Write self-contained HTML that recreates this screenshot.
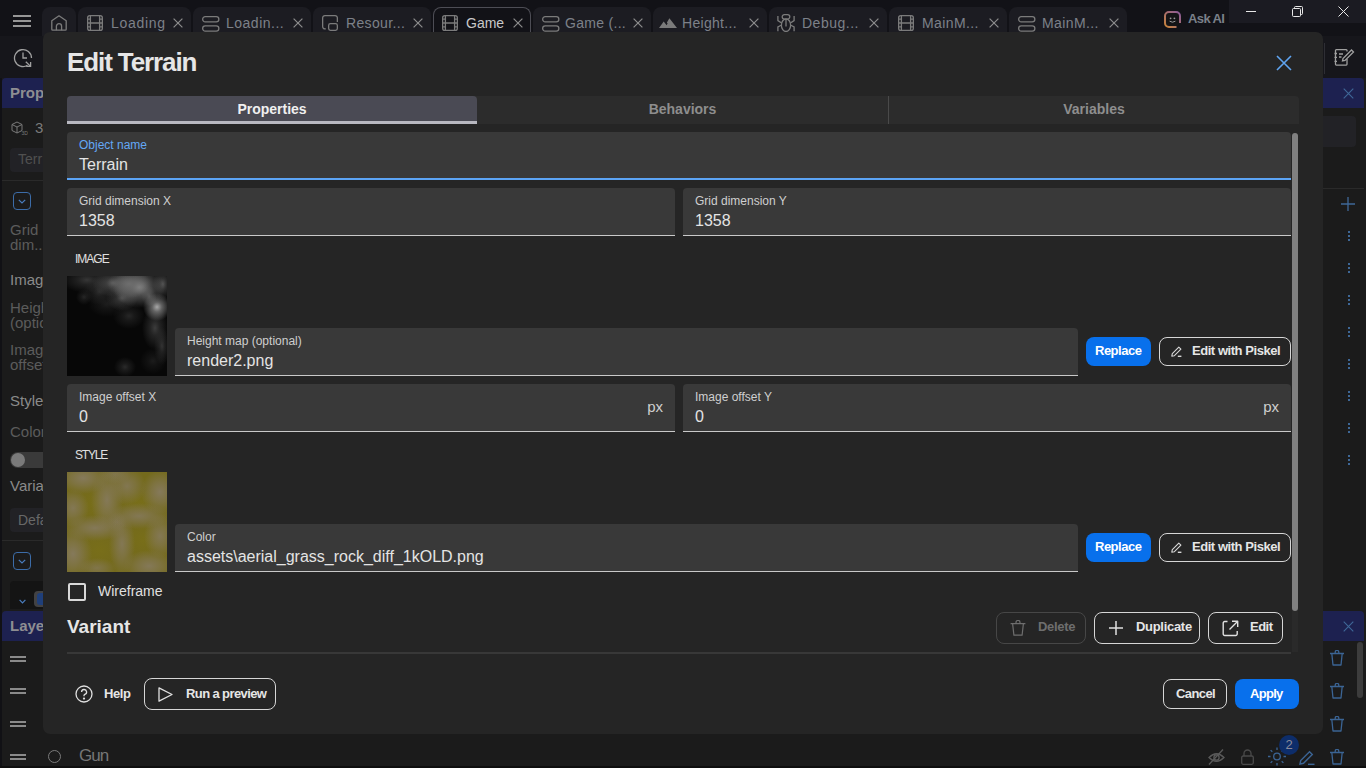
<!DOCTYPE html>
<html><head><meta charset="utf-8">
<style>
*{box-sizing:border-box;margin:0;padding:0}
html,body{width:1366px;height:768px;overflow:hidden;background:#1b1b1b;font-family:"Liberation Sans",sans-serif;position:relative}
.a{position:absolute}
svg{display:block;position:absolute}
#topbar{left:0;top:0;width:1366px;height:36px;background:#121217}
.tab{position:absolute;top:7px;height:29px;background:#1c1c22;border-radius:8px 8px 0 0}
.ttx{position:absolute;top:15px;font-size:14px;color:#7d8189;white-space:nowrap}.tact{color:#c9c9c9}
.tab.act{background:#121217;border:1px solid #4d4d55;border-bottom:none;color:#c4c4c4}
.ib{color:#9a9a9a}
#dlg{left:43px;top:32px;width:1280px;height:702px;background:#252525;border-radius:7px}
.fld{position:absolute;background:#393939;border-radius:4px 4px 0 0;border-bottom:1px solid #c9c9c9}
.fld .lb{position:absolute;left:12px;top:6px;font-size:12px;color:#cfcfcf;white-space:nowrap}
.fld .vl{position:absolute;left:12px;top:24px;font-size:16px;color:#e4e4e4;white-space:nowrap}
.btn{position:absolute;border:1px solid #d6d6d6;border-radius:8px;color:#e6e6e6;font-weight:bold;font-size:13px;white-space:nowrap}
.bblue{position:absolute;background:#0870ec;border-radius:8px;color:#fff;font-weight:bold;font-size:13px;white-space:nowrap}
.sec{position:absolute;font-size:12px;color:#e0e0e0}
.lp{position:absolute;color:#6e6e6e;font-size:15px;white-space:nowrap}
</style></head><body>
<!-- ===== BACKGROUND ===== -->
<div id="topbar" class="a"></div>
<!-- hamburger -->
<div class="a" style="left:13px;top:15px;width:18px;height:2px;background:#969696"></div>
<div class="a" style="left:13px;top:20px;width:18px;height:2px;background:#969696"></div>
<div class="a" style="left:13px;top:25px;width:18px;height:2px;background:#969696"></div>
<!-- tabs -->
<div class="tab" style="left:42px;width:34px"></div>
<svg style="left:51px;top:15px" width="16" height="16" viewBox="0 0 16 16" fill="none" stroke="#7b7b7b" stroke-width="1.3" stroke-linejoin="round"><path d="M.8 5.8L8 .8L15.2 5.8V14.3A.9 .9 0 0 1 14.3 15.2H1.7A.9 .9 0 0 1 .8 14.3Z"/><path d="M5.4 15.2V11.3A2.6 2.6 0 0 1 10.6 11.3V15.2"/></svg>
<div class="tab" style="left:78px;width:113px"></div><svg style="left:87px;top:15px" width="16" height="16" viewBox="0 0 16 16" fill="none" stroke="#7b7b7b" stroke-width="1.3"><rect x=".65" y=".65" width="14.7" height="14.7" rx="2.2"/><path d="M3.4 .65V15.35M12.6 .65V15.35M3.4 8H12.6M.65 4.2H3.4M.65 8H3.4M.65 11.8H3.4M12.6 4.2H15.35M12.6 8H15.35M12.6 11.8H15.35"/></svg><div class="a ttx" style="left:111px;letter-spacing:0.7px">Loading</div><svg style="left:173px;top:18px" width="10" height="10" viewBox="0 0 10 10" fill="none" stroke="#8c8c8c" stroke-width="1.2"><path d="M.6 .6L9.4 9.4M9.4 .6L.6 9.4"/></svg>
<div class="tab" style="left:193px;width:118px"></div><svg style="left:202px;top:16px" width="18" height="16" viewBox="0 0 18 16" fill="none" stroke="#7b7b7b" stroke-width="1.3"><rect x=".65" y=".65" width="16.2" height="5.2" rx="2.6"/><rect x=".65" y="9.9" width="16.2" height="5.2" rx="2.6"/></svg><div class="a ttx" style="left:226px;letter-spacing:0.5px">Loadin...</div><svg style="left:293px;top:18px" width="10" height="10" viewBox="0 0 10 10" fill="none" stroke="#8c8c8c" stroke-width="1.2"><path d="M.6 .6L9.4 9.4M9.4 .6L.6 9.4"/></svg>
<div class="tab" style="left:313px;width:118px"></div><svg style="left:322px;top:15px" width="16" height="16" viewBox="0 0 16 16" fill="none" stroke="#7b7b7b" stroke-width="1.3"><path d="M3.8 13.9H3A2.3 2.3 0 0 1 .65 11.6V3A2.3 2.3 0 0 1 3 .65H13A2.3 2.3 0 0 1 15.35 3V7"/><rect x="6.65" y="8.6" width="8.7" height="6.75" rx="1.8"/></svg><div class="a ttx" style="left:346px;letter-spacing:0.35px">Resour...</div><svg style="left:413px;top:18px" width="10" height="10" viewBox="0 0 10 10" fill="none" stroke="#8c8c8c" stroke-width="1.2"><path d="M.6 .6L9.4 9.4M9.4 .6L.6 9.4"/></svg>
<div class="tab act" style="left:433px;width:98px"></div><svg style="left:442px;top:15px" width="16" height="16" viewBox="0 0 16 16" fill="none" stroke="#7b7b7b" stroke-width="1.3"><rect x=".65" y=".65" width="14.7" height="14.7" rx="2.2"/><path d="M3.4 .65V15.35M12.6 .65V15.35M3.4 8H12.6M.65 4.2H3.4M.65 8H3.4M.65 11.8H3.4M12.6 4.2H15.35M12.6 8H15.35M12.6 11.8H15.35"/></svg><div class="a ttx tact" style="left:466px;letter-spacing:0px">Game</div><svg style="left:513px;top:18px" width="10" height="10" viewBox="0 0 10 10" fill="none" stroke="#8c8c8c" stroke-width="1.2"><path d="M.6 .6L9.4 9.4M9.4 .6L.6 9.4"/></svg>
<div class="tab" style="left:533px;width:118px"></div><svg style="left:542px;top:16px" width="18" height="16" viewBox="0 0 18 16" fill="none" stroke="#7b7b7b" stroke-width="1.3"><rect x=".65" y=".65" width="16.2" height="5.2" rx="2.6"/><rect x=".65" y="9.9" width="16.2" height="5.2" rx="2.6"/></svg><div class="a ttx" style="left:565px;letter-spacing:0.3px">Game (...</div><svg style="left:633px;top:18px" width="10" height="10" viewBox="0 0 10 10" fill="none" stroke="#8c8c8c" stroke-width="1.2"><path d="M.6 .6L9.4 9.4M9.4 .6L.6 9.4"/></svg>
<div class="tab" style="left:653px;width:114px"></div><svg style="left:659px;top:18px" width="18" height="10" viewBox="0 0 18 10"><path fill="#7b7b7b" d="M0 10L4.7 3.6L7.6 7.3L8.6 5.6L7.9 4.4L10.4 .2L18 10Z"/></svg><div class="a ttx" style="left:682px;letter-spacing:0.3px">Height...</div><svg style="left:749px;top:18px" width="10" height="10" viewBox="0 0 10 10" fill="none" stroke="#8c8c8c" stroke-width="1.2"><path d="M.6 .6L9.4 9.4M9.4 .6L.6 9.4"/></svg>
<div class="tab" style="left:769px;width:118px"></div><svg style="left:777px;top:14px" width="18" height="18" viewBox="0 0 18 18" fill="none" stroke="#7b7b7b" stroke-width="1.3"><rect x="5.2" y=".65" width="7.6" height="4.4" rx="2.2"/><ellipse cx="9" cy="11.2" rx="4.6" ry="6.3"/><path d="M9 5V12.5M.9 2V6.6L4.6 9M17.1 2V6.6L13.4 9M4.6 11L.9 13V17.3M13.4 11L17.1 13V17.3"/></svg><div class="a ttx" style="left:802px;letter-spacing:0.5px">Debug...</div><svg style="left:869px;top:18px" width="10" height="10" viewBox="0 0 10 10" fill="none" stroke="#8c8c8c" stroke-width="1.2"><path d="M.6 .6L9.4 9.4M9.4 .6L.6 9.4"/></svg>
<div class="tab" style="left:889px;width:118px"></div><svg style="left:898px;top:15px" width="16" height="16" viewBox="0 0 16 16" fill="none" stroke="#7b7b7b" stroke-width="1.3"><rect x=".65" y=".65" width="14.7" height="14.7" rx="2.2"/><path d="M3.4 .65V15.35M12.6 .65V15.35M3.4 8H12.6M.65 4.2H3.4M.65 8H3.4M.65 11.8H3.4M12.6 4.2H15.35M12.6 8H15.35M12.6 11.8H15.35"/></svg><div class="a ttx" style="left:922px;letter-spacing:0.4px">MainM...</div><svg style="left:989px;top:18px" width="10" height="10" viewBox="0 0 10 10" fill="none" stroke="#8c8c8c" stroke-width="1.2"><path d="M.6 .6L9.4 9.4M9.4 .6L.6 9.4"/></svg>
<div class="tab" style="left:1009px;width:118px"></div><svg style="left:1018px;top:16px" width="18" height="16" viewBox="0 0 18 16" fill="none" stroke="#7b7b7b" stroke-width="1.3"><rect x=".65" y=".65" width="16.2" height="5.2" rx="2.6"/><rect x=".65" y="9.9" width="16.2" height="5.2" rx="2.6"/></svg><div class="a ttx" style="left:1042px;letter-spacing:0.4px">MainM...</div><svg style="left:1109px;top:18px" width="10" height="10" viewBox="0 0 10 10" fill="none" stroke="#8c8c8c" stroke-width="1.2"><path d="M.6 .6L9.4 9.4M9.4 .6L.6 9.4"/></svg>
<!-- Ask AI -->
<svg style="left:1164px;top:11px" width="17" height="17" viewBox="0 0 17 17"><defs><linearGradient id="ag" x1="1" y1="0" x2="0" y2="1"><stop offset="0" stop-color="#8a5a9a"/><stop offset="1" stop-color="#c8843a"/></linearGradient></defs><path d="M12.5 16H5A4 4 0 0 1 1 12V5A4 4 0 0 1 5 1H12A4 4 0 0 1 16 5V12" fill="#141416" stroke="url(#ag)" stroke-width="2"/><circle cx="6.6" cy="7.3" r=".9" fill="#9a9a9a"/><circle cx="10.4" cy="7.3" r=".9" fill="#9a9a9a"/><path d="M5.6 10.2Q8.5 12.2 11.4 10.2" stroke="#9a9a9a" stroke-width="1" fill="none"/></svg>
<div class="a" style="left:1188px;top:11px;font-size:13px;font-weight:bold;color:#7a8089;letter-spacing:-0.6px">Ask AI</div>
<!-- window controls -->
<div class="a" style="left:1229px;top:0;width:137px;height:23px;background:#1b1b22"></div>
<div class="a" style="left:1246px;top:11px;width:10px;height:1px;background:#e8e8e8"></div>
<svg style="left:1292px;top:6px" width="11" height="11" viewBox="0 0 11 11" fill="none" stroke="#e8e8e8" stroke-width="1"><rect x=".5" y="2.5" width="8" height="8" rx="1"/><path d="M2.5 2.5V1.5A1 1 0 0 1 3.5 .5H9.5A1 1 0 0 1 10.5 1.5V7.5A1 1 0 0 1 9.5 8.5H8.5"/></svg>
<svg style="left:1338px;top:6px" width="11" height="11" viewBox="0 0 11 11" fill="none" stroke="#e8e8e8" stroke-width="1"><path d="M.5 .5L10.5 10.5M10.5 .5L.5 10.5"/></svg>

<!-- left toolbar / panel -->
<div class="a" style="left:0;top:36px;width:1366px;height:42px;background:#16161b"></div>
<div class="a" style="left:0;top:78px;width:2px;height:690px;background:#111115"></div>
<svg style="left:13px;top:48px" width="20" height="20" viewBox="0 0 20 20" fill="none" stroke="#a0a0a0" stroke-width="1.3"><path d="M18.5 10A8.5 8.5 0 1 0 14.5 17.3"/><path d="M10 4.5V10H14"/><path d="M12.8 13.8L17.6 18.4M17.6 13.9V18.4H13.2"/></svg>
<div class="a" style="left:2px;top:78px;width:41px;height:30px;background:#1d2150;border-radius:4px 0 0 0"></div>
<div class="lp" style="left:10px;top:84px;color:#8e8e92;font-weight:bold;font-size:15px">Prope</div>
<svg style="left:11px;top:121px" width="17" height="14" viewBox="0 0 17 14" fill="none" stroke="#7a7a7a" stroke-width="1"><path d="M1 3.5L6 1L11 3.5V9.5L6 12L1 9.5Z M1 3.5L6 6L11 3.5 M6 6V12"/><text x="10.5" y="13.5" font-size="5" fill="#7a7a7a" stroke="none" font-family="Liberation Sans">3D</text></svg>
<div class="lp" style="left:35px;top:119px;font-size:15px;color:#7a7a7a">3</div>
<div class="a" style="left:10px;top:148px;width:33px;height:24px;background:#222226;border-radius:4px 0 0 4px"></div>
<div class="lp" style="left:18px;top:151px;font-size:14px;color:#505050">Terr</div>
<div class="a" style="left:2px;top:180px;width:41px;height:1px;background:#2a2a2a"></div>
<div class="a" style="left:13px;top:192px;width:18px;height:18px;border:1.5px solid #3c6ca8;border-radius:4px"></div>
<svg style="left:18px;top:199px" width="8" height="5" viewBox="0 0 8 5" fill="none" stroke="#4a7ec0" stroke-width="1.2"><path d="M.8 .8L4 4L7.2 .8"/></svg>
<div class="lp" style="left:10px;top:221px;color:#5c5c5c">Grid</div>
<div class="lp" style="left:10px;top:236px;color:#5c5c5c">dim...</div>
<div class="lp" style="left:10px;top:271px;color:#8a8a8a">Image</div>
<div class="lp" style="left:10px;top:299px;color:#5c5c5c">Heigh</div>
<div class="lp" style="left:10px;top:314px;color:#5c5c5c">(optio</div>
<div class="lp" style="left:10px;top:341px;color:#5c5c5c">Image</div>
<div class="lp" style="left:10px;top:356px;color:#5c5c5c">offset</div>
<div class="lp" style="left:10px;top:392px;color:#8a8a8a">Style</div>
<div class="lp" style="left:10px;top:423px;color:#5c5c5c">Color</div>
<div class="a" style="left:10px;top:452px;width:33px;height:16px;background:#3a3a3a;border-radius:8px 0 0 8px"></div>
<div class="a" style="left:11px;top:453px;width:14px;height:14px;background:#7a7a7a;border-radius:7px"></div>
<div class="lp" style="left:10px;top:477px;color:#8a8a8a">Varia</div>
<div class="a" style="left:10px;top:508px;width:33px;height:24px;background:#222226;border-radius:4px 0 0 4px"></div>
<div class="lp" style="left:18px;top:512px;font-size:14px;color:#686868">Defa</div>
<div class="a" style="left:2px;top:540px;width:41px;height:1px;background:#2a2a2a"></div>
<div class="a" style="left:13px;top:552px;width:18px;height:18px;border:1.5px solid #3c6ca8;border-radius:4px"></div>
<svg style="left:18px;top:559px" width="8" height="5" viewBox="0 0 8 5" fill="none" stroke="#4a7ec0" stroke-width="1.2"><path d="M.8 .8L4 4L7.2 .8"/></svg>
<div class="a" style="left:10px;top:581px;width:33px;height:28px;background:#141414;border-radius:4px 0 0 0"></div>
<svg style="left:19px;top:599px" width="7" height="5" viewBox="0 0 7 5" fill="none" stroke="#4a7ec0" stroke-width="1.2"><path d="M.6 .8L3.5 3.8L6.4 .8"/></svg>
<div class="a" style="left:34px;top:591px;width:9px;height:16px;background:#424244;border-radius:4px 0 0 4px;overflow:hidden"><div class="a" style="left:3px;top:2px;width:12px;height:12px;background:#1f3f7a;border-radius:3px"></div></div>
<div class="a" style="left:2px;top:611px;width:41px;height:30px;background:#1d2150;border-radius:4px 0 0 0"></div>
<div class="lp" style="left:10px;top:617px;color:#8e8e92;font-weight:bold;font-size:15px">Layer</div>
<div class="a" style="left:10px;top:656px;width:16px;height:2px;background:#8a8a8a"></div><div class="a" style="left:10px;top:660px;width:16px;height:2px;background:#8a8a8a"></div>
<div class="a" style="left:10px;top:688px;width:16px;height:2px;background:#8a8a8a"></div><div class="a" style="left:10px;top:692px;width:16px;height:2px;background:#8a8a8a"></div>
<div class="a" style="left:10px;top:721px;width:16px;height:2px;background:#8a8a8a"></div><div class="a" style="left:10px;top:725px;width:16px;height:2px;background:#8a8a8a"></div>
<div class="a" style="left:10px;top:754px;width:16px;height:2px;background:#8a8a8a"></div><div class="a" style="left:10px;top:758px;width:16px;height:2px;background:#8a8a8a"></div>
<div class="a" style="left:48px;top:750px;width:13px;height:13px;border:1.3px solid #7a7a7a;border-radius:50%"></div>
<div class="a" style="left:79px;top:746px;font-size:17px;color:#767676;letter-spacing:-1px">Gun</div>
<div class="a" style="left:0;top:766px;width:1366px;height:2px;background:#0e0e0e"></div>

<!-- right panel -->
<div class="a" style="left:1324px;top:43px;width:1px;height:31px;background:#2e2e34"></div>
<svg style="left:1334px;top:49px" width="21" height="17" viewBox="0 0 21 17" fill="none" stroke="#a0a0a0" stroke-width="1.3"><path d="M13 2.5V1.5A.8 .8 0 0 0 12.2 .7H2.3A.8 .8 0 0 0 1.5 1.5V15.3A.8 .8 0 0 0 2.3 16.1H12.2A.8 .8 0 0 0 13 15.3V10"/><path d="M.5 4.5H3M.5 8.4H3M.5 12.3H3M5 5H9M5 8H7.5"/><path d="M8.5 12L9 9.5L17.5 1L19.5 3L11 11.5Z"/></svg>
<div class="a" style="left:1323px;top:78px;width:41px;height:30px;background:#1d2150;border-radius:0 4px 0 0"></div>
<svg style="left:1343px;top:88px" width="11" height="11" viewBox="0 0 11 11" fill="none" stroke="#3f6898" stroke-width="1.1"><path d="M.7 .7L10.3 10.3M10.3 .7L.7 10.3"/></svg>
<div class="a" style="left:1323px;top:116px;width:33px;height:31px;background:#222226;border-radius:0 4px 4px 0"></div>
<div class="a" style="left:1323px;top:188px;width:41px;height:1px;background:#2a2a2a"></div>
<svg style="left:1341px;top:197px" width="14" height="14" viewBox="0 0 14 14" fill="none" stroke="#3f6898" stroke-width="1.3"><path d="M7 0V14M0 7H14"/></svg>
<div class="a" style="left:1348px;top:231px;width:2px;height:2px;background:#3e6796;box-shadow:0 4px 0 #3e6796,0 8px 0 #3e6796"></div>
<div class="a" style="left:1348px;top:263px;width:2px;height:2px;background:#3e6796;box-shadow:0 4px 0 #3e6796,0 8px 0 #3e6796"></div>
<div class="a" style="left:1348px;top:295px;width:2px;height:2px;background:#3e6796;box-shadow:0 4px 0 #3e6796,0 8px 0 #3e6796"></div>
<div class="a" style="left:1348px;top:327px;width:2px;height:2px;background:#3e6796;box-shadow:0 4px 0 #3e6796,0 8px 0 #3e6796"></div>
<div class="a" style="left:1348px;top:359px;width:2px;height:2px;background:#3e6796;box-shadow:0 4px 0 #3e6796,0 8px 0 #3e6796"></div>
<div class="a" style="left:1348px;top:391px;width:2px;height:2px;background:#3e6796;box-shadow:0 4px 0 #3e6796,0 8px 0 #3e6796"></div>
<div class="a" style="left:1348px;top:423px;width:2px;height:2px;background:#3e6796;box-shadow:0 4px 0 #3e6796,0 8px 0 #3e6796"></div>
<div class="a" style="left:1348px;top:455px;width:2px;height:2px;background:#3e6796;box-shadow:0 4px 0 #3e6796,0 8px 0 #3e6796"></div>
<div class="a" style="left:1323px;top:611px;width:41px;height:30px;background:#1d2150;border-radius:0 4px 0 0"></div>
<svg style="left:1343px;top:621px" width="11" height="11" viewBox="0 0 11 11" fill="none" stroke="#3f6898" stroke-width="1.1"><path d="M.7 .7L10.3 10.3M10.3 .7L.7 10.3"/></svg>
<div class="a" style="left:1357px;top:642px;width:6px;height:56px;background:#3c3c3c;border-radius:3px"></div>
<svg style="left:1329px;top:650px" width="16" height="16" viewBox="0 0 16 16" fill="none" stroke="#3b6494" stroke-width="1.3" stroke-linejoin="round"><path d="M1 3.5H15M6.2 3.5V2.2A1.5 1.5 0 0 1 9.8 2.2V3.5M2.8 3.5L4 15H12L13.2 3.5"/></svg>
<svg style="left:1329px;top:683px" width="16" height="16" viewBox="0 0 16 16" fill="none" stroke="#3b6494" stroke-width="1.3" stroke-linejoin="round"><path d="M1 3.5H15M6.2 3.5V2.2A1.5 1.5 0 0 1 9.8 2.2V3.5M2.8 3.5L4 15H12L13.2 3.5"/></svg>
<svg style="left:1329px;top:716px" width="16" height="16" viewBox="0 0 16 16" fill="none" stroke="#3b6494" stroke-width="1.3" stroke-linejoin="round"><path d="M1 3.5H15M6.2 3.5V2.2A1.5 1.5 0 0 1 9.8 2.2V3.5M2.8 3.5L4 15H12L13.2 3.5"/></svg>
<svg style="left:1329px;top:749px" width="16" height="16" viewBox="0 0 16 16" fill="none" stroke="#3b6494" stroke-width="1.3" stroke-linejoin="round"><path d="M1 3.5H15M6.2 3.5V2.2A1.5 1.5 0 0 1 9.8 2.2V3.5M2.8 3.5L4 15H12L13.2 3.5"/></svg>
<svg style="left:1208px;top:749px" width="17" height="16" viewBox="0 0 17 16" fill="none" stroke="#5a5a5a" stroke-width="1.3"><path d="M1 8.5Q8.5 1 16 8.5Q8.5 16 1 8.5Z"/><circle cx="8.5" cy="8.5" r="2.6"/><path d="M15 .5L1 15.5"/></svg>
<svg style="left:1241px;top:749px" width="13" height="16" viewBox="0 0 13 16" fill="none" stroke="#4a4a4a" stroke-width="1.3"><rect x=".7" y="7" width="11.6" height="8.3" rx="1.5"/><path d="M3 7V4.5A3.5 3.5 0 0 1 10 4.5V7"/></svg>
<svg style="left:1267px;top:747px" width="20" height="19" viewBox="0 0 20 19" fill="none" stroke="#3b6494" stroke-width="1.3"><circle cx="10" cy="9.5" r="3.3"/><path d="M10 .5V3M10 16V18.5M1 9.5H3.5M16.5 9.5H19M3.6 3.1L5.3 4.8M14.7 14.2L16.4 15.9M3.6 15.9L5.3 14.2M14.7 4.8L16.4 3.1"/></svg>
<div class="a" style="left:1279px;top:735px;width:20px;height:20px;border-radius:50%;background:#0d2d6a;color:#8a8a9a;font-size:13px;text-align:center;line-height:20px">2</div>
<svg style="left:1299px;top:750px" width="16" height="15" viewBox="0 0 16 15" fill="none" stroke="#3b6494" stroke-width="1.4"><path d="M1 14L1.7 10.5L10.5 1.7L13.3 4.5L4.5 13.3Z"/><path d="M9 14.3H15.5"/></svg>

<!-- ===== DIALOG ===== -->
<div id="dlg" class="a"></div>
<div class="a" style="left:67px;top:47px;font-size:26px;font-weight:bold;color:#e6e6e6;letter-spacing:-1.1px">Edit Terrain</div>
<svg style="left:1276px;top:55px" width="16" height="16" viewBox="0 0 16 16" fill="none" stroke="#5fa4f0" stroke-width="1.6"><path d="M1 1L15 15M15 1L1 15"/></svg>

<!-- tabs bar -->
<div class="a" style="left:67px;top:96px;width:1232px;height:28px;background:#2c2c2c;border-radius:4px 4px 0 0"></div>
<div class="a" style="left:67px;top:96px;width:410px;height:28px;background:#4a4a54;border-radius:4px 4px 0 0"></div>
<div class="a" style="left:67px;top:121px;width:410px;height:3px;background:#b8b8c0"></div>
<div class="a" style="left:888px;top:96px;width:1px;height:28px;background:#4a4a4a"></div>
<div class="a" style="left:67px;top:101px;width:410px;text-align:center;font-size:14px;font-weight:bold;color:#f0f0f0">Properties</div>
<div class="a" style="left:477px;top:101px;width:411px;text-align:center;font-size:14px;font-weight:bold;color:#8e8e8e">Behaviors</div>
<div class="a" style="left:889px;top:101px;width:410px;text-align:center;font-size:14px;font-weight:bold;color:#8e8e8e">Variables</div>

<!-- scrollbar -->
<div class="a" style="left:1292px;top:133px;width:6px;height:519px;background:#2a2a2a;border-radius:3px"></div>
<div class="a" style="left:1292px;top:133px;width:6px;height:478px;background:#808080;border-radius:3px"></div>

<!-- fields -->
<div class="fld" style="left:67px;top:132px;width:1224px;height:48px;border-bottom:2px solid #5ca4f5"><div class="lb" style="color:#64a8f5">Object name</div><div class="vl">Terrain</div></div>
<div class="fld" style="left:67px;top:188px;width:608px;height:48px"><div class="lb">Grid dimension X</div><div class="vl">1358</div></div>
<div class="fld" style="left:683px;top:188px;width:608px;height:48px"><div class="lb">Grid dimension Y</div><div class="vl">1358</div></div>

<div class="sec" style="left:75px;top:252px;letter-spacing:-1px">IMAGE</div>
<div class="a" style="left:67px;top:276px;width:100px;height:100px;background:
radial-gradient(ellipse 22px 14px at 62px 8px,rgba(110,110,110,1) 0,rgba(110,110,110,0) 100%),
radial-gradient(ellipse 26px 21px at 72px 11px,rgba(140,140,140,1) 0,rgba(140,140,140,0.55) 35%,rgba(140,140,140,0) 100%),
radial-gradient(ellipse 14px 14px at 90px 31px,rgba(168,168,168,1) 0,rgba(168,168,168,0.55) 35%,rgba(168,168,168,0) 100%),
radial-gradient(ellipse 21px 14px at 46px 7px,rgba(90,90,90,1) 0,rgba(90,90,90,0.55) 35%,rgba(90,90,90,0) 100%),
radial-gradient(ellipse 16px 13px at 55px 22px,rgba(74,74,74,1) 0,rgba(74,74,74,0.55) 35%,rgba(74,74,74,0) 100%),
radial-gradient(ellipse 26px 13px at 20px 4px,rgba(54,54,54,1) 0,rgba(54,54,54,0.55) 35%,rgba(54,54,54,0) 100%),
radial-gradient(ellipse 16px 13px at 32px 16px,rgba(44,44,44,1) 0,rgba(44,44,44,0.55) 35%,rgba(44,44,44,0) 100%),
radial-gradient(ellipse 10px 16px at 96px 8px,rgba(80,80,80,1) 0,rgba(80,80,80,0.55) 35%,rgba(80,80,80,0) 100%),
radial-gradient(ellipse 13px 22px at 88px 52px,rgba(60,60,60,1) 0,rgba(60,60,60,0.55) 35%,rgba(60,60,60,0) 100%),
radial-gradient(ellipse 8px 19px at 95px 70px,rgba(51,51,51,1) 0,rgba(51,51,51,0.55) 35%,rgba(51,51,51,0) 100%),
radial-gradient(ellipse 11px 10px at 58px 91px,rgba(42,42,42,1) 0,rgba(42,42,42,0.55) 35%,rgba(42,42,42,0) 100%),
radial-gradient(ellipse 8px 8px at 17px 21px,rgba(38,38,38,1) 0,rgba(38,38,38,0.55) 35%,rgba(38,38,38,0) 100%),
radial-gradient(ellipse 16px 13px at 62px 40px,rgba(38,38,38,1) 0,rgba(38,38,38,0.55) 35%,rgba(38,38,38,0) 100%),
radial-gradient(ellipse 8px 10px at 82px 20px,rgba(58,58,58,1) 0,rgba(58,58,58,0.55) 35%,rgba(58,58,58,0) 100%),
radial-gradient(ellipse 19px 13px at 40px 28px,rgba(30,30,30,1) 0,rgba(30,30,30,0.55) 35%,rgba(30,30,30,0) 100%),
radial-gradient(ellipse 13px 13px at 86px 85px,rgba(28,28,28,1) 0,rgba(28,28,28,0.55) 35%,rgba(28,28,28,0) 100%),
#070707"></div>
<div class="fld" style="left:175px;top:328px;width:903px;height:48px"><div class="lb">Height map (optional)</div><div class="vl">render2.png</div></div>
<div class="bblue" style="left:1086px;top:337px;width:65px;height:29px"><span class="a" style="left:9px;top:6px;letter-spacing:-0.5px">Replace</span></div>
<div class="btn" style="left:1159px;top:337px;width:132px;height:29px"><span class="a" style="left:32px;top:5px;letter-spacing:-0.45px">Edit with Piskel</span></div>
<svg style="left:1171px;top:346px" width="11" height="11" viewBox="0 0 11 11" fill="none" stroke="#d8d8d8" stroke-width="1.1" stroke-linejoin="round"><path d="M.8 10.2L1.3 7.6L7.8 1.1L9.9 3.2L3.4 9.7Z"/><path d="M6.8 10.3H10.4" stroke-width="1.4"/></svg>

<div class="fld" style="left:67px;top:384px;width:608px;height:48px"><div class="lb">Image offset X</div><div class="vl">0</div><div class="a" style="right:12px;top:14px;font-size:15px;color:#cfcfcf">px</div></div>
<div class="fld" style="left:683px;top:384px;width:608px;height:48px"><div class="lb">Image offset Y</div><div class="vl">0</div><div class="a" style="right:12px;top:14px;font-size:15px;color:#cfcfcf">px</div></div>

<div class="sec" style="left:75px;top:448px;letter-spacing:-1.2px">STYLE</div>
<div class="a" style="left:67px;top:472px;width:100px;height:100px;background:
radial-gradient(ellipse 26px 16px at 16px 6px,rgba(134,122,94,0.95) 0,rgba(134,122,94,0.57) 45%,rgba(134,122,94,0) 100%),
radial-gradient(ellipse 16px 32px at 40px 28px,rgba(134,122,94,0.9) 0,rgba(134,122,94,0.54) 45%,rgba(134,122,94,0) 100%),
radial-gradient(ellipse 16px 19px at 6px 36px,rgba(134,122,94,0.85) 0,rgba(134,122,94,0.51) 45%,rgba(134,122,94,0) 100%),
radial-gradient(ellipse 19px 19px at 60px 14px,rgba(134,122,94,0.8) 0,rgba(134,122,94,0.48) 45%,rgba(134,122,94,0) 100%),
radial-gradient(ellipse 19px 22px at 93px 20px,rgba(134,122,94,0.95) 0,rgba(134,122,94,0.57) 45%,rgba(134,122,94,0) 100%),
radial-gradient(ellipse 32px 13px at 72px 44px,rgba(134,122,94,0.85) 0,rgba(134,122,94,0.51) 45%,rgba(134,122,94,0) 100%),
radial-gradient(ellipse 32px 13px at 28px 56px,rgba(134,122,94,0.9) 0,rgba(134,122,94,0.54) 45%,rgba(134,122,94,0) 100%),
radial-gradient(ellipse 13px 32px at 55px 72px,rgba(134,122,94,0.85) 0,rgba(134,122,94,0.51) 45%,rgba(134,122,94,0) 100%),
radial-gradient(ellipse 19px 26px at 6px 82px,rgba(134,122,94,0.95) 0,rgba(134,122,94,0.57) 45%,rgba(134,122,94,0) 100%),
radial-gradient(ellipse 26px 16px at 82px 94px,rgba(134,122,94,0.9) 0,rgba(134,122,94,0.54) 45%,rgba(134,122,94,0) 100%),
radial-gradient(ellipse 16px 22px at 93px 64px,rgba(134,122,94,0.85) 0,rgba(134,122,94,0.51) 45%,rgba(134,122,94,0) 100%),
radial-gradient(ellipse 10px 10px at 50px 50px,rgba(134,122,94,0.6) 0,rgba(134,122,94,0.36) 45%,rgba(134,122,94,0) 100%),
radial-gradient(ellipse 19px 10px at 30px 96px,rgba(134,122,94,0.7) 0,rgba(134,122,94,0.42) 45%,rgba(134,122,94,0) 100%),
radial-gradient(ellipse 16px 10px at 48px 2px,rgba(134,122,94,0.7) 0,rgba(134,122,94,0.42) 45%,rgba(134,122,94,0) 100%),
radial-gradient(ellipse 21px 18px at 28px 32px,rgba(122,112,24,0.7) 0,rgba(122,112,24,0) 100%),
radial-gradient(ellipse 21px 15px at 72px 30px,rgba(122,112,24,0.7) 0,rgba(122,112,24,0) 100%),
radial-gradient(ellipse 21px 18px at 76px 68px,rgba(122,112,24,0.7) 0,rgba(122,112,24,0) 100%),
radial-gradient(ellipse 21px 18px at 32px 78px,rgba(122,112,24,0.7) 0,rgba(122,112,24,0) 100%),
#746a1c"></div>
<div class="fld" style="left:175px;top:524px;width:903px;height:48px"><div class="lb">Color</div><div class="vl">assets\aerial_grass_rock_diff_1kOLD.png</div></div>
<div class="bblue" style="left:1086px;top:533px;width:65px;height:29px"><span class="a" style="left:9px;top:6px;letter-spacing:-0.5px">Replace</span></div>
<div class="btn" style="left:1159px;top:533px;width:132px;height:29px"><span class="a" style="left:32px;top:5px;letter-spacing:-0.45px">Edit with Piskel</span></div>
<svg style="left:1171px;top:542px" width="11" height="11" viewBox="0 0 11 11" fill="none" stroke="#d8d8d8" stroke-width="1.1" stroke-linejoin="round"><path d="M.8 10.2L1.3 7.6L7.8 1.1L9.9 3.2L3.4 9.7Z"/><path d="M6.8 10.3H10.4" stroke-width="1.4"/></svg>

<div class="a" style="left:68px;top:583px;width:18px;height:18px;border:2px solid #d8d8d8;border-radius:2px"></div>
<div class="a" style="left:98px;top:583px;font-size:14px;color:#e0e0e0">Wireframe</div>

<div class="a" style="left:67px;top:616px;font-size:19px;font-weight:bold;color:#e6e6e6;letter-spacing:0px">Variant</div>
<div class="btn" style="left:996px;top:612px;width:90px;height:32px;border-color:#474747;color:#6e6e6e"><span class="a" style="left:41px;top:6px;letter-spacing:-0.3px">Delete</span></div>
<svg style="left:1010px;top:620px" width="16" height="16" viewBox="0 0 16 16" fill="none" stroke="#6e6e6e" stroke-width="1.2" stroke-linejoin="round"><path d="M.6 3.6H15.4M6 3.6V2.4A2 2 0 0 1 10 2.4V3.6M2.6 3.6L3.9 15.2H12.1L13.4 3.6"/></svg>
<div class="btn" style="left:1094px;top:612px;width:106px;height:32px"><span class="a" style="left:41px;top:6px;letter-spacing:-0.3px">Duplicate</span></div>
<svg style="left:1109px;top:621px" width="14" height="14" viewBox="0 0 14 14" fill="none" stroke="#e0e0e0" stroke-width="1.5"><path d="M7 0V14M0 7H14"/></svg>
<div class="btn" style="left:1208px;top:612px;width:75px;height:32px"><span class="a" style="left:41px;top:6px;letter-spacing:-0.5px">Edit</span></div>
<svg style="left:1222px;top:620px" width="17" height="17" viewBox="0 0 17 17" fill="none" stroke="#e0e0e0" stroke-width="1.4" stroke-linejoin="round"><path d="M5.5 1.5H2.7A1.5 1.5 0 0 0 1.2 3V14A1.5 1.5 0 0 0 2.7 15.5H13.7A1.5 1.5 0 0 0 15.2 14V11"/><path d="M7.5 9.5L15.5 1.5M10 1.3H15.7V7"/></svg>
<div class="a" style="left:67px;top:652px;width:1224px;height:2px;background:#383838"></div>
<div class="a" style="left:1292px;top:611px;width:6px;height:41px;background:#2a2a2a"></div>

<!-- footer -->
<svg style="left:75px;top:685px" width="18" height="18" viewBox="0 0 18 18" fill="none" stroke="#e0e0e0" stroke-width="1.3"><circle cx="9" cy="9" r="8"/><path d="M6.6 7A2.5 2.5 0 1 1 9.8 9.4C9.2 9.7 9 10 9 10.8V11.3"/><circle cx="9" cy="13.6" r=".5" fill="#e0e0e0"/></svg>
<div class="a" style="left:104px;top:686px;font-size:13px;font-weight:bold;color:#e6e6e6;letter-spacing:-0.4px">Help</div>
<div class="btn" style="left:144px;top:678px;width:132px;height:32px"><span class="a" style="left:41px;top:7px;letter-spacing:-0.6px">Run a preview</span></div>
<svg style="left:158px;top:687px" width="15" height="15" viewBox="0 0 15 15" fill="none" stroke="#e0e0e0" stroke-width="1.3" stroke-linejoin="round"><path d="M1 .9L14 7.5L1 14.1Z"/></svg>
<div class="btn" style="left:1163px;top:679px;width:64px;height:30px"><span class="a" style="left:12px;top:6px;letter-spacing:-0.6px">Cancel</span></div>
<div class="bblue" style="left:1235px;top:679px;width:64px;height:30px"><span class="a" style="left:15px;top:7px;letter-spacing:-0.7px">Apply</span></div>

</body></html>
